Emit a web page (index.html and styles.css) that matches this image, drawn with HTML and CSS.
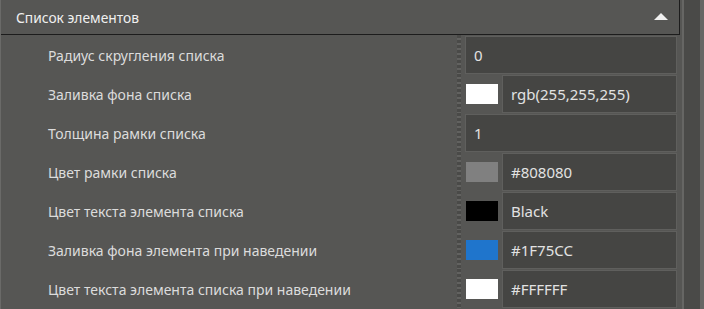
FILE: index.html
```html
<!DOCTYPE html>
<html lang="ru">

<head>
    <meta charset="UTF-8">
    <title>Список элементов</title>
    <link rel="stylesheet" href="styles.css">
</head>

<body class="main">
    <div class="panel">
        <div class="content">
            <div class="section-head">
                <span>Список элементов</span>
                <span class="arrow"></span>
            </div>

            <div class="prop-row">
                <div class="prop-name">Радиус скругления списка</div>
                <div class="splitter"></div>
                <div class="prop-value">
                    <div class="field">0</div>
                </div>
            </div>
            <div class="prop-row">
                <div class="prop-name">Заливка фона списка</div>
                <div class="splitter"></div>
                <div class="prop-value">
                    <span class="swatch" style="background: #ffffff;"></span>
                    <div class="field">rgb(255,255,255)</div>
                </div>
            </div>
            <div class="prop-row">
                <div class="prop-name">Толщина рамки списка</div>
                <div class="splitter"></div>
                <div class="prop-value">
                    <div class="field">1</div>
                </div>
            </div>
            <div class="prop-row">
                <div class="prop-name">Цвет рамки списка</div>
                <div class="splitter"></div>
                <div class="prop-value">
                    <span class="swatch" style="background: #808080;"></span>
                    <div class="field">#808080</div>
                </div>
            </div>
            <div class="prop-row">
                <div class="prop-name">Цвет текста элемента списка</div>
                <div class="splitter"></div>
                <div class="prop-value">
                    <span class="swatch" style="background: #000000;"></span>
                    <div class="field">Black</div>
                </div>
            </div>
            <div class="prop-row">
                <div class="prop-name">Заливка фона элемента при наведении</div>
                <div class="splitter"></div>
                <div class="prop-value">
                    <span class="swatch" style="background: #1f75cc;"></span>
                    <div class="field">#1F75CC</div>
                </div>
            </div>
            <div class="prop-row">
                <div class="prop-name">Цвет текста элемента списка при наведении</div>
                <div class="splitter"></div>
                <div class="prop-value">
                    <span class="swatch" style="background: #ffffff;"></span>
                    <div class="field">#FFFFFF</div>
                </div>
            </div>
        </div>

        <!-- scrollbar track on the right -->
        <div class="scroll">
            <div class="scroll-track"></div>
        </div>
    </div>
</body>

</html>
```

FILE: styles.css
```css
.main {
    margin: 0;
    background-color: #565654;
    font-family: "Noto Sans", "Open Sans", sans-serif;
    font-size: 14px;
    color: #dcdcdc;
    overflow: hidden;
}

.panel {
    display: flex;
    height: 309px;
    border-left: 1px solid #6a6a68;
    box-sizing: border-box;
}

.content {
    width: 681px;
}

/* Section header with collapse arrow */
.section-head {
    height: 34px;
    display: flex;
    align-items: center;
    justify-content: space-between;
    padding: 0 11px 0 15px;
    border-top: 1px solid #6a6a68;
    border-bottom: 1px solid #1c1c1c;
    border-right: 1px solid #1c1c1c;
    color: #f0f0f0;
    margin-top: -1px;
    font-size: 13.8px;
}

.arrow {
    width: 0;
    height: 0;
    border-left: 7px solid transparent;
    border-right: 7px solid transparent;
    border-bottom: 7px solid #f0f0f0;
    margin-top: -2px;
}

.prop-row {
    display: flex;
    height: 39px;
}

.prop-name {
    width: 409px;
    padding-left: 47px;
    padding-top: 2px;
    display: flex;
    align-items: center;
    white-space: nowrap;
}

/* Dotted column splitter */
.splitter {
    width: 4px;
    margin-right: 4px;
    background: repeating-linear-gradient(to bottom, #4a4a48 0, #4a4a48 3px, #626260 3px, #626260 5px);
}

.prop-value {
    flex: 1;
    display: flex;
    align-items: center;
    padding-top: 1px;
    margin-right: 3px;
    height: 38px;
}

.swatch {
    width: 32px;
    height: 20px;
    margin-left: 1px;
    margin-right: 4px;
    flex: none;
}

.field {
    flex: 1;
    height: 36px;
    line-height: 36px;
    padding-left: 8px;
    background-color: #454543;
    border: 1px solid #5f5f5d;
    color: #e2e2e2;
    font-size: 15px;
}

.scroll {
    flex: 1;
    display: flex;
    padding-left: 2px;
}

.scroll-track {
    width: 16px;
    background-color: #4a4a48;
    border-left: 2px solid #666664;
    border-right: 4px solid #666664;
}
```
